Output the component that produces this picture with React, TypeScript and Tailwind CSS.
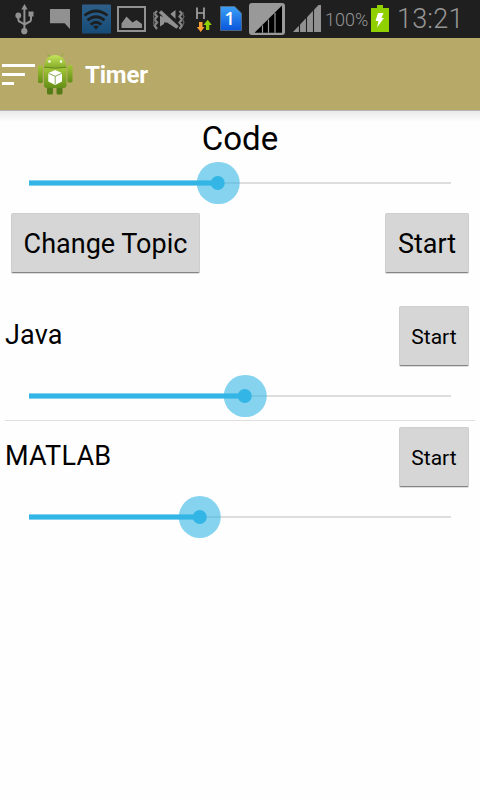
import type { ReactNode } from "react";
import { clsx } from "clsx";

function StatusIcon({
  x,
  width,
  className,
  children,
}: {
  x: number;
  width: number;
  className?: string;
  children: ReactNode;
}) {
  // every icon shares the 38px tall bar, x is where its slice starts
  return (
    <svg
      width={width}
      height={38}
      viewBox={`${x} 0 ${width} 38`}
      className={clsx("shrink-0", className)}
      fill="#919191"
    >
      {children}
    </svg>
  );
}

function StatusBar() {
  return (
    <div className="flex h-[38px] items-center bg-[#1f1f1f] pl-[14px] text-[#969696]">
      <StatusIcon x={14} width={21}>
        <path d="M24.5 4l3.2 5.5h-6.4z" />
        <circle cx="24.3" cy="31.2" r="3.1" />
        <circle cx="18.3" cy="15.5" r="2.9" />
        <rect x="28.5" y="11.5" width="5" height="5" />
        <path
          d="M24.4 9v22M18.3 15v4.5q0 1.8 2 2.5l4.1 2.5M31 16v3.5q0 1.8-2 2.5l-4.6 2.5"
          fill="none"
          stroke="#919191"
          strokeWidth="2"
        />
      </StatusIcon>
      <StatusIcon x={50} width={20} className="ml-[15px]">
        <path d="M50 9h20v20l-5.4-5.7H50z" />
      </StatusIcon>
      <StatusIcon x={82} width={29} className="ml-[12px]">
        <defs>
          <linearGradient id="wifi" x1="0" y1="0" x2="0" y2="1">
            <stop offset="0" stopColor="#2d5f88" />
            <stop offset="1" stopColor="#174c78" />
          </linearGradient>
        </defs>
        <rect x="82" y="4.5" width="29" height="29" rx="1" fill="url(#wifi)" />
        <g fill="none" stroke="#1d2023" strokeWidth="2.8">
          <path d="M84.500 15.500q11.500-9 23 0" />
          <path d="M87.500 20.300q8.500-7.200 17 0" />
          <path d="M90.700 24.600q5.300-4.600 10.600 0" />
        </g>
        <path d="M93.200 26.600q2.800-2 5.600 0L96 29.700z" fill="#1d2023" />
      </StatusIcon>
      <StatusIcon x={117} width={29} className="ml-[6px]">
        <rect x="118" y="7" width="27" height="24" fill="none" stroke="#919191" strokeWidth="2" />
        <path d="M121.500 28v-4.500l5-7 6 6 4-2.500 5.500 4v4z" />
      </StatusIcon>
      <StatusIcon x={152} width={34} className="ml-[6px]">
        <path d="M160 16.500h7l8.500-6.500v18l-8.500-5.500h-7z" />
        <path d="M161 9.500l18 17" stroke="#1f1f1f" strokeWidth="6.500" />
        <path d="M160 11.500l17.500 16" stroke="#919191" strokeWidth="3.600" />
        <path d="M160 15.500v11l4-2.500v-5z" />
        <path
          d="M157 11l-2.500 2.500 2.500 3-2.500 3 2.500 3-2.500 3 2.500 3.500M179.500 11l2.500 2.500-2.500 3 2.500 3-2.500 3 2.500 3-2.500 3.500"
          fill="none"
          stroke="#858585"
          strokeWidth="2.200"
        />
        <path
          d="M153.500 12.500l1 1-1 3 1 3-1 3 1 3M183.500 12.500l-1 1 1.500 3-1.500 3 1.500 3-1.500 3"
          fill="none"
          stroke="#666"
          strokeWidth="1.200"
        />
      </StatusIcon>
      <StatusIcon x={195} width={18} className="ml-[9px]">
        <path d="M197 7.500v11.500M204 7.500v11.500M197 13h7" stroke="#a3a3a3" strokeWidth="1.700" />
        <path d="M199 22h3.500v5h2l-3.800 5-3.900-5h2.200z" fill="#ffa033" />
        <path d="M206 30v-5h-2.500l4.200-5.200 4.100 5.200H209.300V30z" fill="#8fd000" />
      </StatusIcon>
      <StatusIcon x={220} width={22} className="ml-[7px]">
        <defs>
          <linearGradient id="sim" x1="0" y1="0" x2="0" y2="1">
            <stop offset="0" stopColor="#3ba0f5" />
            <stop offset="1" stopColor="#0a55dc" />
          </linearGradient>
        </defs>
        <path d="M220.500 6.500h14.200l6.800 6.800v17.200h-21z" fill="url(#sim)" stroke="#5a7186" strokeWidth=".8" />
        <text x="224.500" y="25" fill="#fff" fontFamily="Open Sans, sans-serif" fontSize="18" fontWeight="600">
          1
        </text>
      </StatusIcon>
      <StatusIcon x={249} width={36} className="ml-[7px]">
        <rect x="249" y="3" width="36" height="32" rx="3" fill="#999" />
        <path d="M254.500 32.800L282 5.500v27.300z" fill="#000" />
        <path d="M262.500 25.500v7.300M268.500 19.500v13.300M275 13v19.800" stroke="#999" strokeWidth="1.200" />
      </StatusIcon>
      <StatusIcon x={293} width={28} className="ml-[8px]">
        <path d="M293 32L318.500 5H321v27z" />
        <path d="M299.500 22v10M306.500 15v17M313.500 8v24" stroke="#1f1f1f" strokeWidth="1.100" />
      </StatusIcon>
      <span className="ml-[4px] mt-[2px] w-[42px] shrink-0 whitespace-nowrap text-[18px] font-light leading-none">
        100%
      </span>
      <StatusIcon x={371} width={18} className="ml-[4px]">
        <path d="M371 8h6V5h6v3h6v24h-18z" fill="#91d000" />
        <path d="M378 13h5.500l-2 5h2.500l-7 9.500 1.500-6.500h-3z" fill="#fff" />
      </StatusIcon>
      <span className="ml-[8px] whitespace-nowrap text-[27px] font-light leading-none tracking-[0.2px]">13:21</span>
    </div>
  );
}

function AndroidLogo() {
  return (
    <svg width="37" height="44" viewBox="0 0 37 44" className="shrink-0">
      <defs>
        <linearGradient id="droid" x1="0" y1="0" x2="0" y2="1">
          <stop offset="0" stopColor="#a3c638" />
          <stop offset="1" stopColor="#648e17" />
        </linearGradient>
        <linearGradient id="head" x1="0" y1="0" x2="0" y2="1">
          <stop offset="0" stopColor="#c4e45c" />
          <stop offset="1" stopColor="#86ae27" />
        </linearGradient>
      </defs>
      <path d="M10.500 1.500l2.500 4M26 1.500l-2.500 4" stroke="#8cad35" strokeWidth="1" />
      <rect x="10" y="31" width="6" height="11.500" rx="1.500" fill="#557c17" />
      <rect x="19.500" y="31" width="6" height="11.500" rx="1.500" fill="#557c17" />
      <rect x="1" y="13.500" width="4.800" height="17.500" rx="1.500" fill="url(#droid)" />
      <rect x="30.500" y="13" width="5" height="17.500" rx="1.500" fill="url(#droid)" />
      <path d="M7 16h22.500v17q0 3-3 3H10q-3 0-3-3z" fill="url(#droid)" />
      <path d="M7.300 14.500C7.300 8 12 3 18.200 3S29.200 8 29.200 14.500q-11 2.500-21.900 0z" fill="url(#head)" />
      <path d="M7.200 15.200q11 2 22.200 0" fill="none" stroke="#5f861c" />
      <circle cx="12.500" cy="9.500" r="1.200" fill="#fff" />
      <circle cx="24" cy="9.500" r="1.200" fill="#fff" />
      <path d="M18.200 18l6.800 3v8.500l-6.800 3.500-6.900-3.500V21z" fill="#fff" />
      <path d="M11.500 21.300l6.700 3 6.700-3M18.200 24.300v8" fill="none" stroke="#86a850" />
    </svg>
  );
}

function ActionBar() {
  return (
    <header className="flex h-[72px] items-center bg-[#b7a967]">
      <div className="mt-[1px] flex w-[37px] flex-col gap-[6px] pl-[2px]">
        <div className="h-[3px] w-[33px] bg-white" />
        <div className="h-[3px] w-[23px] bg-white" />
        <div className="h-[3px] w-[12px] bg-white" />
      </div>
      <AndroidLogo />
      <h1 className="ml-[11px] mt-[2px] text-[24px] font-bold leading-none tracking-[-0.2px] text-white">Timer</h1>
    </header>
  );
}

function SeekBar({ value }: { value: number }) {
  return (
    <div className="relative mx-[29px] flex h-[44px] items-center">
      <div className="h-[2px] w-full bg-[#dedede]" />
      <div
        className="absolute left-0 h-[6px] border-y border-[#84d2ef] bg-[#33b5e5]"
        style={{ width: `${value}%` }}
      />
      <div
        className="absolute flex size-[42.500px] -translate-x-1/2 items-center justify-center rounded-full bg-[#33b5e5]/60"
        style={{ left: `${value}%` }}
      >
        <div className="size-[14px] rounded-full bg-[#33b5e5]" />
      </div>
    </div>
  );
}

function Button({ children, className }: { children: ReactNode; className?: string }) {
  return (
    <button
      className={clsx(
        "h-[60px] shrink-0 whitespace-nowrap rounded-[2px] border border-[#cecece] border-b-[#858585] bg-[#d6d6d6] pt-[3px] leading-none text-black shadow-[0_1px_0_#dcdcdc]",
        className,
      )}
    >
      {children}
    </button>
  );
}

function TopicRow({ name, value }: { name: string; value: number }) {
  return (
    <li className="h-[121px] pt-[6px]">
      <div className="flex h-[60px] items-center justify-between pl-[5px] pr-[11px]">
        <span className="mb-[1px] text-[27px] leading-none tracking-[0.2px]">{name}</span>
        <Button className="w-[70px] text-[21px]">Start</Button>
      </div>
      <div className="pt-[8px]">
        <SeekBar value={value} />
      </div>
    </li>
  );
}

export default function App() {
  return (
    <div className="h-[800px] w-[480px] overflow-hidden bg-[#fefefe] font-['Roboto',sans-serif] text-black">
      <StatusBar />
      <ActionBar />
      <div className="-mb-[12px] h-[12px] border-t border-[#b5b5b5] bg-linear-to-b from-[#eaeaea] to-[#fefefe]" />
      <main>
        <h2 className="h-[51px] pt-[12px] text-center text-[33px] leading-[33px]">Code</h2>
        <SeekBar value={44.8} />
        <div className="flex justify-between pl-[11px] pr-[11px] pt-[8px]">
          <Button className="w-[189px] text-[27px]">Change Topic</Button>
          <Button className="w-[84px] text-[27px]">Start</Button>
        </div>
        <ul className="mt-[27px]">
          <TopicRow name="Java" value={51.2} />
          <li className="mx-[5px] -mt-px h-px bg-[#dfdfdf]" />
          <TopicRow name="MATLAB" value={40.5} />
        </ul>
      </main>
    </div>
  );
}
